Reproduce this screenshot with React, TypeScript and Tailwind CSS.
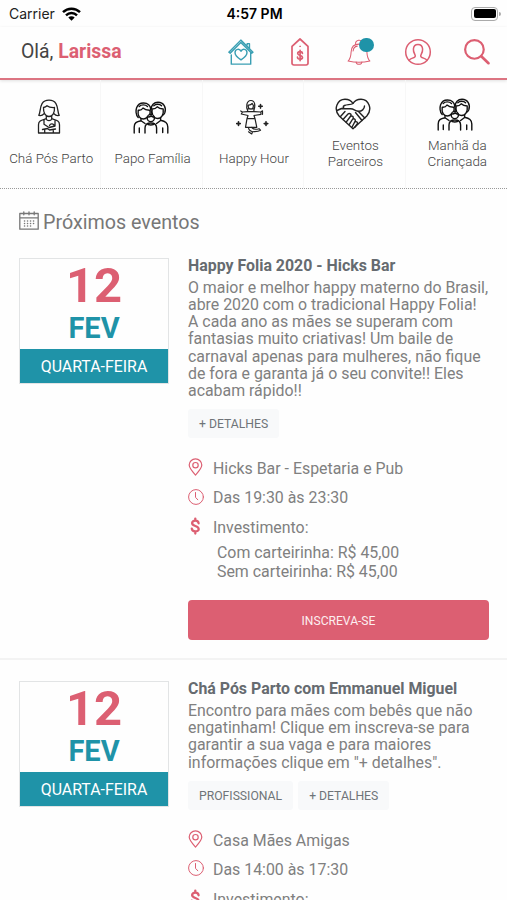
import type { ReactNode } from "react";
import clsx from "clsx";

type Event = {
  title: string;
  description: string[];
  tags: string[];
  place: string;
  time: string;
};

const events: Event[] = [
  {
    title: "Happy Folia 2020 - Hicks Bar",
    description: [
      "O maior e melhor happy materno do Brasil,",
      "abre 2020 com o tradicional Happy Folia!",
      "A cada ano as mães se superam com",
      "fantasias muito criativas! Um baile de",
      "carnaval apenas para mulheres, não fique",
      "de fora e garanta já o seu convite!! Eles",
      "acabam rápido!!",
    ],
    tags: ["+ DETALHES"],
    place: "Hicks Bar - Espetaria e Pub",
    time: "Das 19:30 às 23:30",
  },
  {
    title: "Chá Pós Parto com Emmanuel Miguel",
    description: [
      "Encontro para mães com bebês que não",
      "engatinham! Clique em inscreva-se para",
      "garantir a sua vaga e para maiores",
      'informações clique em "+ detalhes".',
    ],
    tags: ["PROFISSIONAL", "+ DETALHES"],
    place: "Casa Mães Amigas",
    time: "Das 14:00 às 17:30",
  },
];

type IconProps = { w: number; h: number; stroke?: number; className?: string; children: ReactNode };

function Icon({ w, h, stroke = 1.3, className, children }: IconProps) {
  return (
    <svg
      width={w}
      height={h}
      viewBox={`0 0 ${w} ${h}`}
      fill="none"
      stroke="currentColor"
      strokeWidth={stroke}
      strokeLinecap="round"
      strokeLinejoin="round"
      className={clsx("shrink-0", className)}
    >
      {children}
    </svg>
  );
}

function HouseIcon() {
  return (
    <Icon w={28} h={28} stroke={1.5} className="scale-95 text-[#3a9fb3]">
      <path d="M1.2 14.3 13.8 1.5l12.8 12.8-1.3 1L13.8 4 2.6 15.3zM20.5 6.5V5.2h2.4v5" />
      <path d="M3.8 17v9.8h20.4V14.5" />
      <path d="M14 22.3c-3.5-2.4-6.3-4.6-6.3-7.6 0-4 5-4.8 6.3-1.4 1.3-3.4 6.3-2.6 6.3 1.4 0 3-2.8 5.2-6.3 7.6z" />
    </Icon>
  );
}

function TagIcon() {
  return (
    <Icon w={18} h={28} stroke={1.7} className="text-[#dc5f72]">
      <path d="M1 8.3 9 1l8 7.3v16.9a1.8 1.8 0 0 1-1.8 1.8H2.8A1.8 1.8 0 0 1 1 25.2z" />
      <circle cx="9" cy="8.3" r=".3" strokeWidth="1" />
      <path d="M11.4 15.3c-.2-2.2-4.6-2.3-4.7.1-.1 2.6 4.8 1.3 4.8 4 0 2.4-4.8 2.4-5-.2M9.1 12.3v10.3" />
    </Icon>
  );
}

function BellIcon() {
  return (
    <div className="relative">
      <Icon w={26} h={28} stroke={1.1} className="scale-95 text-[#dc5f72]">
        <path d="M1.5 23.5c2.800-2.500 3-5.500 3.200-9.500.2-5 3-8.300 8.300-8.300s8.100 3.300 8.300 8.300c.2 4 .4 7 3.200 9.500-7 1.600-16 1.600-23 0z" />
        <path d="M9.500 6.300C8.500 1 16 .2 16.500 4M6.800 13c.2-3 1.700-4.800 4.400-5.200M10 24.600c.5 3.200 5.500 3.200 6 0" />
      </Icon>
      <span className="absolute top-0 left-[13.5px] size-[14.5px] rounded-full bg-[#1f93a8]" />
    </div>
  );
}

function UserIcon() {
  return (
    <Icon w={28} h={28} stroke={1.5} className="text-[#dc5f72]">
      <circle cx="14" cy="14" r="12.3" />
      <path d="M5 22.4c1.200-1.800 3.200-2.200 5-2.900 1.400-.6 1.600-1.600.9-2.900-1-1.800-1.700-3.700-1.500-5.600.2-2.700 2-4.500 4.600-4.500s4.400 1.800 4.600 4.500c.2 1.900-.5 3.800-1.500 5.600-.7 1.300-.5 2.300.9 2.900 1.800.7 3.800 1.100 5 2.900" />
    </Icon>
  );
}

function SearchIcon() {
  return (
    <Icon w={28} h={28} stroke={2.3} className="scale-95 text-[#dc5f72]">
      <circle cx="11.3" cy="11.3" r="9.8" />
      <path d="m18.5 18.5 7.6 7.3" strokeWidth="2.8" />
    </Icon>
  );
}

function MotherIcon() {
  return (
    <Icon w={24} h={36} className="text-[#222]">
      <path d="M6.5 8.5c-.3 5.500 2 9 5.500 9s5.800-3.500 5.500-9c-4 .2-6-.5-7.500-1.700-1 1-2 1.500-3.500 1.700z" />
      <path d="M6.800 14.800c-1 1.400-2.700 2-5 1.600C4.300 12.500 1.500 1.200 12 1.200s7.700 11.300 10.200 15.200c-2.300.4-4-.2-5-1.600" />
      <path d="M9.3 17.300v2.400c-4 1.400-7.800 1.700-7.800 6V34h6.200v-3.500M14.700 17.300v2.400c4 1.400 7.800 1.700 7.800 6V34h-6.200v-3.500M9 20c1.500 2.200 4.500 2.200 6 0M7 20.800v4.500l5 3.200 6-1.500v-6M12.500 26.500c1-2.300 4.500-2 4.700.5M5.500 30.500l5-1 2 1.500 6-1M7.700 34h8.600" />
    </Icon>
  );
}

function FamilyIcon() {
  return (
    <Icon w={36} h={33} stroke={1.4} className="text-[#111]">
      <path d="M5.200 16.500C2.500 14 2.800 9 3.600 6.800 4.900 3.200 7.500 2 10.500 2c4.300 0 7 2.800 7.300 6.500M18.300 8C18 4 21 1.300 25 1.300c5.800 0 8.600 5.200 6.800 10.500-.5 1.300-1.300 2-2 2.500" />
      <path d="M5.200 9.200c2.300.3 3.800-.6 4.800-2.200 1.500 1.500 4 2.300 7 2.200M5.200 9.200c-.8 5.200 1.500 8.800 5 8.800 1.700 0 3-.6 4-1.700M16.900 9.200c.4 1.500.3 3-.2 4.300M19.200 8c2.300 0 4-.8 5-2.200 1.500 1.500 3.300 2.200 6 2.200M19.200 8c-.4 2-.2 3.700.3 5.300M21 16c1 1 2.200 1.500 3.700 1.500 3.800 0 6.200-4 5.500-9.500" />
      <path d="M17.800 8.500c.9 2 .9 3.300.2 5M6.200 5.500c2-2 6-2.200 8.300 0M20.800 4.700c2-2 5.800-2 7.800 0" />
      <circle cx="17.8" cy="17" r="3.6" />
      <path d="M14.400 16c2 .2 3-.4 3.700-1.300.8 1 1.600 1.300 2.800 1.300M12 32v-5c0-3.500 2.300-5 5.800-5s5.800 1.500 5.800 5v5M14 22.700c1 1.800 6.500 1.800 7.600 0" />
      <path d="M8 18.200v1.500c-4.500 1-6.800 2-6.800 6.300v6M27.600 17.200v2c4.700 1.200 7.200 2.500 7.200 6.800v6M6.300 27v4.500M29.700 27v4.500M8 19.700l4 2.800M27.600 19.500l-4 3" />
    </Icon>
  );
}

function DancerIcon() {
  return (
    <Icon w={34} h={36} stroke={1.2} className="text-[#222]">
      <path d="M12.800 12c-2-4-1.500-10.300 3-10.500 4.500-.2 4.700 5.500 3 10.500M13.200 6c1.700.2 3-.3 4-1.500l1.200 2c0 2-.8 3.700-2.600 3.700S13 8.500 13.200 6M13 9.800h5.500" />
      <path d="m12.500 12.700-5 .3-1.200 2 6.700 1.500-1 3.200h8l-1-3.200 7-1.200-.2-2.300-6.500-.3zM7.500 13l-1.800-1M25.800 13l1.700-1.200v3.500M12 19.700l-1.500 8.600h11.300L20 19.700" />
      <path d="M13.500 28.500c0 2.300.8 3.200 4 4.200l-.8 2.300-3.200-2.200M16.800 28.500c1.500 1.800 4 2.200 7.200 1.200l1.500 1.500c-3 2-6.500 1-8 1.500" />
      <path d="M25.500 5.500v3.600M23.700 7.300h3.600M3.500 22.800v3.600M1.700 24.600h3.600M31 22.800v3.600M29.200 24.600h3.600" strokeWidth="1.6" />
    </Icon>
  );
}

function HandshakeHeartIcon() {
  return (
    <Icon w={36} h={32} stroke={1.4} className="text-[#222]">
      <path d="M18 30.800 4.200 18C-2 11 2.500 1.200 10 1.200c3.500 0 6.500 1.500 8 4.300 1.500-2.800 4.500-4.300 8-4.300 7.500 0 12 9.800 5.800 16.800z" />
      <path d="M18 5.500c-2.500 1.500-5.500.8-8.500 2-2 .8-1.500 3.300.5 3.300h5.500c3.500 0 4.500 2 7.500 2.400 3.800.4 6.500-2.200 6.500-5.200M2 12.500l4.500-2 3.500.3M23 13l6.800 7M20.500 14.500l6.500 8" />
      <path d="m8 21.500 5-5.500c1.500-1.400 4 .2 2.700 2l-4.500 6.200M15.500 18.500c1.500-1.200 3.500.2 2.500 2l-3.800 6.200M17.800 21.200c1.500-1 3.200.4 2.300 2l-3 5.800M20 24c1.600-1 3 .4 2.200 1.800L20 29.200M5.500 18.500l4.500-5" />
    </Icon>
  );
}

function PinIcon() {
  return (
    <Icon w={16} h={18} stroke={1.2} className="text-[#dc5f72]">
      <path d="M7.500 17C4 13.200 1.200 10.300 1.200 7.100a6.300 6.200 0 0 1 12.600 0c0 3.200-2.800 6.100-6.300 9.900z" />
      <circle cx="7.5" cy="7.2" r="2.7" />
    </Icon>
  );
}

function ClockIcon() {
  return (
    <Icon w={16} h={18} stroke={1} className="text-[#dc5f72]">
      <circle cx="8" cy="9" r="7.4" />
      <path d="M7.500 4.500v4.800l2.300 2.500" />
    </Icon>
  );
}

function DollarIcon() {
  return (
    <Icon w={16} h={18} stroke={2.3} className="text-[#dc5f72]">
      <path d="M10.600 6.300C10.400 2.900 4.200 2.700 4.100 6c-.1 3.800 6.700 2.200 6.600 6.100-.1 3.200-6.600 3.100-6.900-.5M7.300 1.600v2M7.300 14.500v2" />
    </Icon>
  );
}

function CalendarIcon() {
  return (
    <Icon w={20} h={20} stroke={1.3} className="-mt-[3px] text-[#777]">
      <path d="M.8 2.500h18.400v15.700H.8zM.8 6.800h18.400M4.800.8v3M10 .8v3M15.200.8v3" />
      <path d="M5.500 10h.1M8.500 10h.1M11.500 10h.1M14.500 10h.1M5.500 12.500h.1M8.500 12.500h.1M11.500 12.500h.1M14.500 12.500h.1M5.500 15h.1M8.500 15h.1M11.500 15h.1" strokeWidth="1.5" />
    </Icon>
  );
}

const categories = [
  { lines: ["Chá Pós Parto"], icon: <MotherIcon /> },
  { lines: ["Papo Família"], icon: <FamilyIcon /> },
  { lines: ["Happy Hour"], icon: <DancerIcon /> },
  { lines: ["Eventos", "Parceiros"], icon: <HandshakeHeartIcon /> },
  { lines: ["Manhã da", "Criançada"], icon: <FamilyIcon /> },
];

function StatusBar() {
  return (
    <div className="grid h-[27px] grid-cols-3 items-center pl-[9px] pr-[6px] font-['Inter',sans-serif] text-[14px] text-[#222]">
      <div className="flex items-center gap-[7px]">
        <span>Carrier</span>
        <svg width="19" height="14" viewBox="0 0 19 14" fill="none" stroke="#000" strokeWidth="2.5">
          <path d="M1 5.200a12.200 12.200 0 0 1 17 0M4 8.300a8 8 0 0 1 11 0" />
          <path d="M6.300 10.500a4.600 4.600 0 0 1 6.400 0L9.500 13.700z" fill="#000" stroke="none" />
        </svg>
      </div>
      <span className="-ml-px text-center font-semibold text-black">4:57 PM</span>
      <div className="flex items-center justify-end gap-px">
        <div className="h-[14px] w-[27px] rounded-[4px] border border-[#aaa] p-[1.5px]">
          <div className="h-full rounded-[2px] bg-black" />
        </div>
        <div className="h-[4px] w-[2px] rounded-r-full bg-[#aaa]" />
      </div>
    </div>
  );
}

function DateBox() {
  return (
    <div className="mt-[2px] flex h-[126px] w-[150px] shrink-0 flex-col border border-[#e2e4e5] text-center">
      <div className="flex flex-1 flex-col font-bold">
        <span className="mt-[2px] h-[49px] text-[49px] leading-[49px] text-[#dc5f72]">12</span>
        <span className="mt-[3px] text-[29px] leading-[30px] text-[#1f93a8]">FEV</span>
      </div>
      <div className="h-[34px] bg-[#1f93a8] text-[15.9px] leading-[36px] text-white">QUARTA-FEIRA</div>
    </div>
  );
}

function InfoRow({ icon, children }: { icon: ReactNode; children: ReactNode }) {
  return (
    <div className="flex h-[29.5px] items-center gap-[9px]">
      <span className="-mt-[3px]">{icon}</span>
      <span>{children}</span>
    </div>
  );
}

function EventCard({ event }: { event: Event }) {
  return (
    <article className="flex gap-[19px] border-b-2 border-[#f3f3f3] pr-[18px] pb-[18.5px] pl-[19px] text-[15.9px] text-[#808080]">
      <DateBox />
      <div className="min-w-0 flex-1">
        <h2 className="h-[23px] text-[15.9px] leading-[20px] font-bold whitespace-nowrap text-[#666b70]">{event.title}</h2>
        <p className="leading-[17.15px] whitespace-nowrap">
          {event.description.map((line) => (
            <span key={line} className="block">{line}</span>
          ))}
        </p>
        <div className="mt-[10px] flex gap-[5px]">
          {event.tags.map((tag) => (
            <button key={tag} className="h-[29px] rounded-[3px] bg-[#f8f9fa] px-[11px] pt-[2px] text-[12.2px] text-[#6f7478]">
              {tag}
            </button>
          ))}
        </div>
        <div className="mt-[16px]">
          <InfoRow icon={<PinIcon />}>{event.place}</InfoRow>
          <InfoRow icon={<ClockIcon />}>{event.time}</InfoRow>
          <InfoRow icon={<DollarIcon />}>Investimento:</InfoRow>
        </div>
        <div className="pl-[29px] leading-[19.5px]">
          <p>Com carteirinha: R$ 45,00</p>
          <p>Sem carteirinha: R$ 45,00</p>
        </div>
        <button className="mt-[18px] h-[40px] w-full rounded-[4px] bg-[#dc5f72] pt-[3px] text-[12.1px] text-[#fdeef0]">
          INSCREVA-SE
        </button>
      </div>
    </article>
  );
}

export default function App() {
  return (
    <div className="h-[900px] w-full overflow-hidden bg-[#fefefe] font-['Roboto',sans-serif]">
      <StatusBar />
      <header className="flex h-[53px] items-center border-b-2 border-[#dc7482] pr-px pb-[2px] pl-[21px] shadow-[0_1px_3px_rgba(0,0,0,0.12)]">
        <p className="text-[19.4px] text-[#444]">
          Olá, <span className="font-bold text-[#dc5f72]">Larissa</span>
        </p>
        <nav className="ml-auto grid w-[295px] grid-cols-5 place-items-center">
          <HouseIcon />
          <TagIcon />
          <BellIcon />
          <UserIcon />
          <SearchIcon />
        </nav>
      </header>

      <nav className="grid h-[109px] grid-cols-5 border-b border-dotted border-[#999]">
        {categories.map(({ lines, icon }, i) => (
          <div
            key={lines[0]}
            className={clsx("flex flex-col items-center border-[#f7f7f7] text-black", i < 4 && "border-r")}
          >
            <div className={clsx("flex h-[36px] items-center pr-[2px]", i > 2 ? "mt-[16px]" : "mt-[19px]")}>{icon}</div>
            <p
              className={clsx(
                "pl-[2px] text-center text-[13.4px] leading-[16px] font-light whitespace-nowrap text-[#444]",
                i > 2 ? "mt-[6px]" : "mt-[16px]"
              )}
            >
              {lines.map((line) => (
                <span key={line} className="block">{line}</span>
              ))}
            </p>
          </div>
        ))}
      </nav>

      <main>
        <div className="flex h-[67px] items-center gap-[4px] pl-[19px] text-[19.7px] text-[#777]">
          <CalendarIcon />
          <h1 className="pt-px">Próximos eventos</h1>
        </div>
        {events.map((event, i) => (
          <div key={event.title} className={i > 0 ? "pt-[19px]" : ""}>
            <EventCard event={event} />
          </div>
        ))}
      </main>
    </div>
  );
}
